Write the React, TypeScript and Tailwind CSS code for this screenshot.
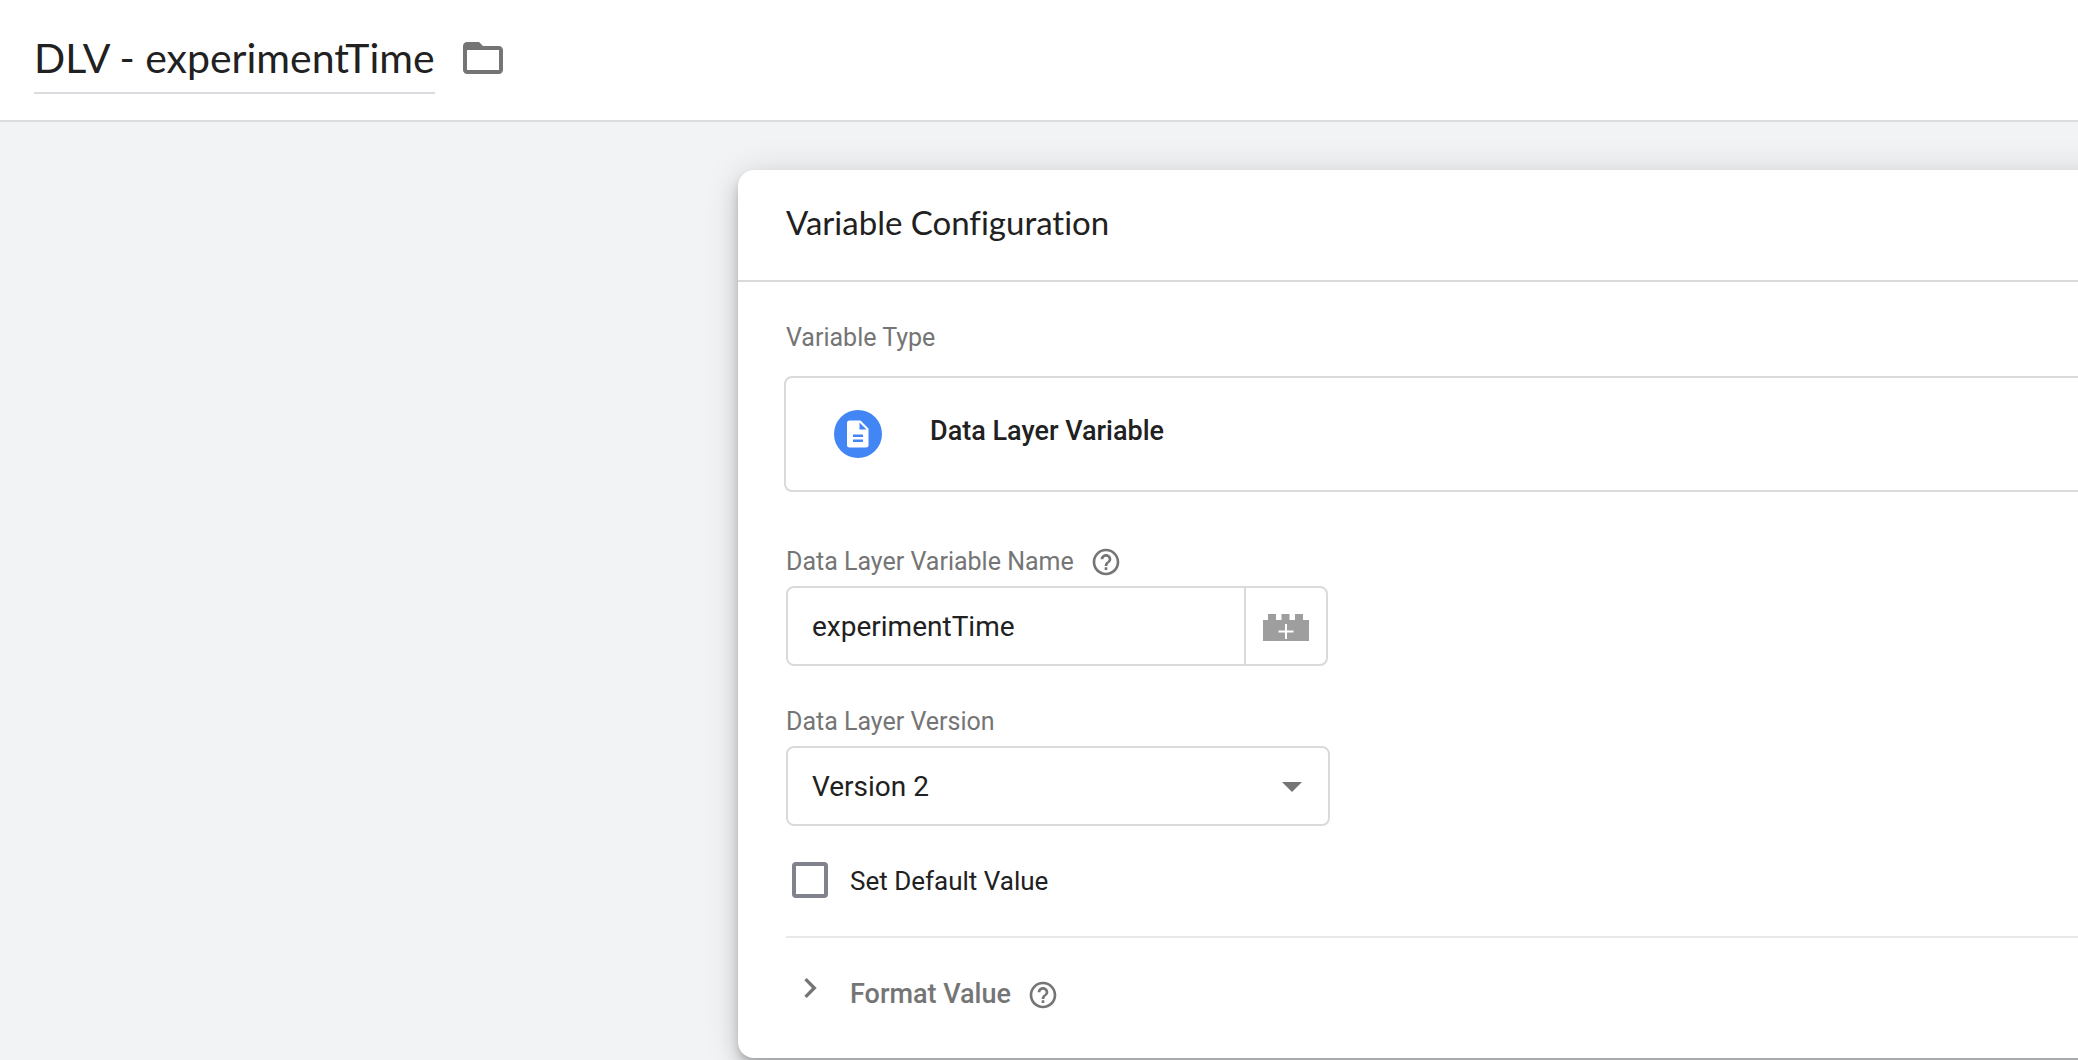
import { useState } from "react";

function FolderIcon() {
  return (
    <svg viewBox="0 0 24 24" className="size-12" fill="#757575" aria-hidden="true">
      <path d="M20 6h-8l-2-2H4c-1.1 0-2 .9-2 2v12c0 1.1.9 2 2 2h16c1.1 0 2-.9 2-2V8c0-1.1-.9-2-2-2zm0 12H4V8h16v10z" />
    </svg>
  );
}

function HelpButton({ label }: { label: string }) {
  return (
    <button type="button" aria-label={label} className="size-8 shrink-0">
      <svg viewBox="0 0 24 24" className="size-8" fill="#757575" aria-hidden="true">
        <path d="M11 18h2v-2h-2v2zm1-16C6.48 2 2 6.48 2 12s4.48 10 10 10 10-4.48 10-10S17.52 2 12 2zm0 18c-4.41 0-8-3.59-8-8s3.59-8 8-8 8 3.59 8 8-3.59 8-8 8zm0-14c-2.21 0-4 1.79-4 4h2c0-1.1.9-2 2-2s2 .9 2 2c0 2-3 1.75-3 5h2c0-2.25 3-2.5 3-5 0-2.21-1.79-4-4-4z" />
      </svg>
    </button>
  );
}

function DocumentIcon() {
  return (
    <span className="flex size-12 shrink-0 items-center justify-center rounded-full bg-[#4285f4]">
      <svg viewBox="0 0 22 28" className="h-7 w-6" aria-hidden="true">
        <path d="M2.500 0.500h11l8 8v16.500a2.500 2.500 0 0 1-2.500 2.500h-16.500a2.500 2.500 0 0 1-2.500-2.500v-22a2.500 2.500 0 0 1 2.500-2.500z" fill="#fff" />
        <path d="M12.500 2.500v7h7zM6 14.500h10v2.500H6zM6 19.500h10v2.500H6z" fill="#4285f4" />
      </svg>
    </span>
  );
}

function BrickIcon() {
  return (
    <svg viewBox="0 0 46 28" className="h-7 w-[46px]" aria-hidden="true">
      <path d="M0 7h5V1h8v6h5.500V1h8v6h5.500V1h8v6h6v21H0z" fill="#9e9e9e" />
      <path d="M23 11v15M15.500 18.500h15" stroke="#fff" strokeWidth="2" />
    </svg>
  );
}

export default function App() {
  const [name, setName] = useState("DLV - experimentTime");
  const [variable, setVariable] = useState("experimentTime");

  return (
    <div className="flex min-h-screen flex-col overflow-hidden bg-[#f1f3f4] font-['Roboto',sans-serif] text-[#212121]">
      <header className="flex h-[122px] items-start gap-6 border-b-2 border-[#dadce0] bg-white px-[34px] pt-6">
        <input
          aria-label="Variable name"
          value={name}
          onChange={(e) => setName(e.target.value)}
          className="h-[70px] w-[401px] border-b-2 border-[#dadce0] pb-[2px] font-['Lato',sans-serif] text-[41px] outline-none"
        />
        <button type="button" aria-label="Choose folder" className="mt-[10px]">
          <FolderIcon />
        </button>
      </header>

      <main className="pt-12 pl-[738px]">
        <section className="-mr-24 rounded-2xl bg-white pb-[46px] shadow-[0_6px_10px_-2px_rgba(0,0,0,0.2),0_12px_20px_rgba(0,0,0,0.14),0_2px_36px_rgba(0,0,0,0.12)]">
          <div className="flex h-28 items-center border-b-2 border-[#dadada] px-12 pb-[6px]">
            <h1 className="font-['Lato',sans-serif] text-[33px] leading-10 [font-variant-ligatures:none]">
              Variable Configuration
            </h1>
          </div>

          <div className="px-12 pt-10">
            <h2 className="text-[25px] leading-8 text-[#757575]">Variable Type</h2>
            <button
              type="button"
              className="mt-[22px] -ml-[2px] flex h-[116px] w-full items-center gap-12 rounded-lg border-2 border-[#dadada] px-12 text-left"
            >
              <DocumentIcon />
              <span className="pb-[6px] text-[27px] leading-8 font-medium">Data Layer Variable</span>
            </button>

            <div className="mt-[54px] flex items-center gap-4 text-[#757575]">
              <label htmlFor="dlv-name" className="text-[25px] leading-8">
                Data Layer Variable Name
              </label>
              <HelpButton label="About data layer variable name" />
            </div>
            <div className="mt-2 flex h-20 w-[542px] rounded-lg border-2 border-[#dadada]">
              <input
                id="dlv-name"
                value={variable}
                onChange={(e) => setVariable(e.target.value)}
                className="min-w-0 flex-1 rounded-l-lg px-6 pt-[2px] text-[28px] outline-none"
              />
              <button
                type="button"
                aria-label="Insert variable"
                className="flex w-[82px] items-center justify-center border-l-2 border-[#dadada] pt-[2px]"
              >
                <BrickIcon />
              </button>
            </div>

            <label htmlFor="dlv-version" className="mt-10 block text-[25px] leading-8 text-[#757575]">
              Data Layer Version
            </label>
            <div className="relative mt-2 h-20 w-[544px]">
              <select
                id="dlv-version"
                defaultValue="2"
                className="size-full appearance-none rounded-lg border-2 border-[#dadada] bg-white px-6 pt-[2px] text-[28px] outline-none"
              >
                <option value="1">Version 1</option>
                <option value="2">Version 2</option>
              </select>
              <svg viewBox="0 0 20 10" className="pointer-events-none absolute top-9 right-7 h-[10px] w-5" fill="#757575" aria-hidden="true">
                <path d="M0 0h20L10 10z" />
              </svg>
            </div>

            <div className="mt-9 flex items-center gap-[22px] pl-[6px]">
              <input
                id="set-default"
                type="checkbox"
                className="size-9 appearance-none rounded border-4 border-[#80838b] bg-white checked:bg-[#4285f4]"
              />
              <label htmlFor="set-default" className="pt-[2px] text-[26px] leading-8">
                Set Default Value
              </label>
            </div>
          </div>

          <div className="mt-[38px] ml-12 flex items-start border-t-2 border-[#e8e8e8] pt-[30px]">
            <button type="button" aria-label="Expand format value" className="ml-1 size-10">
              <svg viewBox="0 0 24 24" className="size-10" fill="#757575" aria-hidden="true">
                <path d="M10 6L8.590 7.410 13.170 12l-4.580 4.590L10 18l6-6z" />
              </svg>
            </button>
            <div className="mt-[10px] ml-5 flex items-center gap-4 text-[#757575]">
              <h2 className="pb-[2px] text-[27px] leading-8 font-medium">Format Value</h2>
              <HelpButton label="About format value" />
            </div>
          </div>
        </section>
      </main>
    </div>
  );
}
